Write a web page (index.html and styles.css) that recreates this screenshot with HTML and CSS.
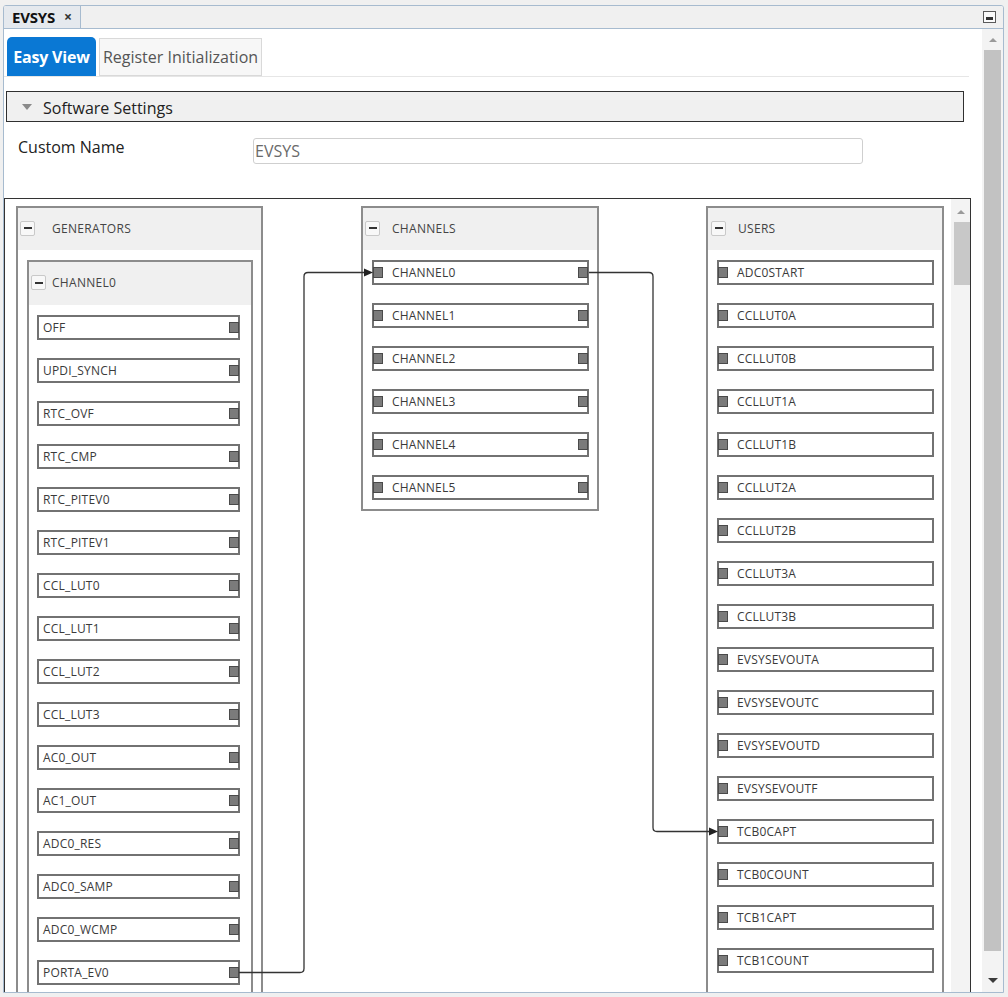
FILE: index.html
```html
<!DOCTYPE html>
<html>
<head>
<meta charset="utf-8">
<title>EVSYS</title>
<link rel="stylesheet" href="styles.css">
</head>
<body>
<div class="panel">
  <div class="tabbar">
    <div class="doc-tab"><span class="doc-title">EVSYS</span><span class="doc-close">×</span></div>
    <div class="min-btn"><span></span></div>
  </div>
  <div class="main">
    <div class="content">
      <div class="view-tabs">
        <div class="vtab active">Easy View</div>
        <div class="vtab">Register Initialization</div>
      </div>
      <div class="section-head"><span class="tri"></span><span class="section-title">Software Settings</span></div>
      <div class="field-row">
        <div class="field-label">Custom Name</div>
        <div class="field-input">EVSYS</div>
      </div>
      <div class="diagram">
        <div class="canvas">
          <div class="box box-gen">
            <div class="box-head"><span class="collapse"></span><span class="box-title t-gen">GENERATORS</span></div>
            <div class="box sub">
              <div class="box-head sub-head"><span class="collapse"></span><span class="box-title t-sub">CHANNEL0</span></div>
              <div class="items items-gen">
                <div class="item"><span class="label">OFF</span><span class="port right"></span></div>
                <div class="item"><span class="label">UPDI_SYNCH</span><span class="port right"></span></div>
                <div class="item"><span class="label">RTC_OVF</span><span class="port right"></span></div>
                <div class="item"><span class="label">RTC_CMP</span><span class="port right"></span></div>
                <div class="item"><span class="label">RTC_PITEV0</span><span class="port right"></span></div>
                <div class="item"><span class="label">RTC_PITEV1</span><span class="port right"></span></div>
                <div class="item"><span class="label">CCL_LUT0</span><span class="port right"></span></div>
                <div class="item"><span class="label">CCL_LUT1</span><span class="port right"></span></div>
                <div class="item"><span class="label">CCL_LUT2</span><span class="port right"></span></div>
                <div class="item"><span class="label">CCL_LUT3</span><span class="port right"></span></div>
                <div class="item"><span class="label">AC0_OUT</span><span class="port right"></span></div>
                <div class="item"><span class="label">AC1_OUT</span><span class="port right"></span></div>
                <div class="item"><span class="label">ADC0_RES</span><span class="port right"></span></div>
                <div class="item"><span class="label">ADC0_SAMP</span><span class="port right"></span></div>
                <div class="item"><span class="label">ADC0_WCMP</span><span class="port right"></span></div>
                <div class="item"><span class="label">PORTA_EV0</span><span class="port right"></span></div>
              </div>
            </div>
          </div>

          <div class="box box-chan">
            <div class="box-head"><span class="collapse"></span><span class="box-title t-col">CHANNELS</span></div>
            <div class="items items-side">
              <div class="item"><span class="port left"></span><span class="label lp">CHANNEL0</span><span class="port right"></span></div>
              <div class="item"><span class="port left"></span><span class="label lp">CHANNEL1</span><span class="port right"></span></div>
              <div class="item"><span class="port left"></span><span class="label lp">CHANNEL2</span><span class="port right"></span></div>
              <div class="item"><span class="port left"></span><span class="label lp">CHANNEL3</span><span class="port right"></span></div>
              <div class="item"><span class="port left"></span><span class="label lp">CHANNEL4</span><span class="port right"></span></div>
              <div class="item"><span class="port left"></span><span class="label lp">CHANNEL5</span><span class="port right"></span></div>
            </div>
          </div>

          <div class="box box-users">
            <div class="box-head"><span class="collapse c-users"></span><span class="box-title t-col">USERS</span></div>
            <div class="items items-side">
              <div class="item"><span class="port left"></span><span class="label lp">ADC0START</span></div>
              <div class="item"><span class="port left"></span><span class="label lp">CCLLUT0A</span></div>
              <div class="item"><span class="port left"></span><span class="label lp">CCLLUT0B</span></div>
              <div class="item"><span class="port left"></span><span class="label lp">CCLLUT1A</span></div>
              <div class="item"><span class="port left"></span><span class="label lp">CCLLUT1B</span></div>
              <div class="item"><span class="port left"></span><span class="label lp">CCLLUT2A</span></div>
              <div class="item"><span class="port left"></span><span class="label lp">CCLLUT2B</span></div>
              <div class="item"><span class="port left"></span><span class="label lp">CCLLUT3A</span></div>
              <div class="item"><span class="port left"></span><span class="label lp">CCLLUT3B</span></div>
              <div class="item"><span class="port left"></span><span class="label lp">EVSYSEVOUTA</span></div>
              <div class="item"><span class="port left"></span><span class="label lp">EVSYSEVOUTC</span></div>
              <div class="item"><span class="port left"></span><span class="label lp">EVSYSEVOUTD</span></div>
              <div class="item"><span class="port left"></span><span class="label lp">EVSYSEVOUTF</span></div>
              <div class="item"><span class="port left"></span><span class="label lp">TCB0CAPT</span></div>
              <div class="item"><span class="port left"></span><span class="label lp">TCB0COUNT</span></div>
              <div class="item"><span class="port left"></span><span class="label lp">TCB1CAPT</span></div>
              <div class="item"><span class="port left"></span><span class="label lp">TCB1COUNT</span></div>
            </div>
          </div>

          <svg class="wires" width="946" height="792" viewBox="5 199 946 792" xmlns="http://www.w3.org/2000/svg">
            <path d="M239 972.5 H300 Q304 972.5 304 968.5 V276.5 Q304 272.5 308 272.5 H366" fill="none" stroke="#333" stroke-width="1.3"/>
            <polygon points="373,272.5 364,268.5 364,276.5" fill="#222"/>
            <path d="M589 272.5 H649 Q653 272.5 653 276.5 V827.5 Q653 831.5 657 831.5 H711" fill="none" stroke="#333" stroke-width="1.3"/>
            <polygon points="718,831.5 709,827.5 709,835.5" fill="#222"/>
          </svg>
        </div>
        <div class="vscroll">
          <span class="arr up"></span>
          <span class="thumb"></span>
        </div>
      </div>
    </div>
    <div class="oscroll">
      <span class="arr up"></span>
      <span class="othumb"></span>
      <span class="arr down"></span>
    </div>
  </div>
</div>
</body>
</html>
```

FILE: styles.css
```css
* { box-sizing: border-box; }
html, body { margin: 0; padding: 0; }
body {
  background: #f0f0f0;
  font-family: "Open Sans", "Noto Sans", sans-serif;
  width: 1008px;
  height: 997px;
  overflow: hidden;
}

.panel {
  margin: 5px 0 0 3px;
  width: 1001px;
  height: 988px;
  border: 1px solid #a7bbcf;
  border-radius: 3px 3px 0 0;
  background: #fff;
  display: flex;
  flex-direction: column;
  overflow: hidden;
}

/* document tab bar */
.tabbar {
  height: 23px;
  flex: none;
  display: flex;
  background: #f0f0f0;
  border-bottom: 1px solid #a7bbcf;
}
.doc-tab {
  width: 77px;
  display: flex;
  align-items: center;
  padding-left: 8px;
  background: #e5e9ee;
  border-right: 1px solid #a7bbcf;
}
.doc-title { font-weight: 700; font-size: 15px; color: #111; letter-spacing: -0.2px; }
.doc-close { margin-left: 9px; font-weight: 700; font-size: 14px; color: #333; line-height: 1; }
.min-btn {
  margin-left: auto;
  margin-right: 7px;
  align-self: center;
  width: 13px;
  height: 12px;
  border: 1px solid #5a5a5a;
  background: #fafafa;
  display: flex;
  align-items: flex-end;
  justify-content: center;
  padding-bottom: 2px;
}
.min-btn span { width: 7px; height: 3px; background: #333; }

.main { flex: 1; display: flex; min-height: 0; }
.content { width: 978px; flex: none; overflow: hidden; background: #fff; }

/* view tabs */
.view-tabs {
  width: 965px;
  height: 48px;
  padding: 8px 0 0 3px;
  border-bottom: 1px solid #e6e6e6;
  display: flex;
  align-items: flex-end;
  gap: 3px;
}
.vtab {
  font-size: 16px;
  display: flex;
  align-items: center;
  justify-content: center;
}
.vtab.active {
  width: 89px;
  height: 39px;
  background: #0a78d4;
  color: #fff;
  font-weight: 700;
  border-radius: 5px 5px 0 0;
  letter-spacing: -0.2px;
}
.vtab:not(.active) {
  width: 163px;
  height: 38px;
  background: #f7f7f7;
  border: 1px solid #d9d9d9;
  color: #555;
}

/* section header */
.section-head {
  margin: 14px 0 0 2px;
  width: 958px;
  height: 31px;
  border: 1px solid #303030;
  background: #f0f0f0;
  display: flex;
  align-items: center;
  font-size: 16px;
  color: #222;
}
.section-title { padding-top: 2px; }
.tri {
  margin-left: 15px;
  margin-right: 11px;
  width: 0;
  height: 0;
  border-left: 5px solid transparent;
  border-right: 5px solid transparent;
  border-top: 6px solid #8a8a8a;
}

.field-row {
  display: flex;
  align-items: flex-start;
  margin-top: 16px;
  padding-left: 14px;
}
.field-label {
  width: 235px;
  margin-top: -1px;
  font-size: 16px;
  line-height: 20px;
  color: #222;
}
.field-input {
  width: 610px;
  height: 26px;
  border: 1px solid #cfcfcf;
  border-radius: 3px;
  font-size: 16px;
  line-height: 24px;
  color: #6a6a6a;
  padding-left: 1px;
}

/* diagram */
.diagram {
  margin-top: 34px;
  width: 967px;
  height: 800px;
  border: 1px solid #333;
  display: flex;
  flex: none;
}
.canvas {
  flex: 1;
  position: relative;
  overflow: hidden;
  display: flex;
  align-items: flex-start;
  padding: 7px 0 0 11px;
}
.wires { position: absolute; left: 0; top: 0; }

.box {
  border: 2px solid #8c8c8c;
  background: #fff;
  flex: none;
}
.box-gen { width: 247px; padding-bottom: 60px; }
.box-chan { width: 238px; margin-left: 98px; padding-bottom: 9px; }
.box-users { width: 238px; margin-left: 107px; padding-bottom: 40px; }
.sub { width: 226px; margin: 10px 0 0 9px; padding-bottom: 40px; }

.box-head {
  height: 42px;
  background: #f0f0f0;
  display: flex;
  align-items: center;
  padding-bottom: 2px;
}
.sub-head { height: 43px; }
.collapse {
  margin-left: 2px;
  width: 15px;
  height: 15px;
  border: 1px solid #c9c9c9;
  border-radius: 2px;
  background: #f8f8f8;
  display: flex;
  align-items: center;
  justify-content: center;
  flex: none;
}
.collapse::before { content: ""; width: 8px; height: 2px; background: #333; }
.c-users { margin-left: 3px; }
.box-title { font-size: 12px; color: #444; letter-spacing: 0.3px; }
.t-gen { margin-left: 17px; }
.t-sub { margin-left: 6px; }
.t-col { margin-left: 12px; }

.items { display: flex; flex-direction: column; gap: 18px; padding-top: 10px; }
.items-gen { padding-left: 8px; }
.items-gen .item { width: 203px; }
.items-side { padding-left: 9px; }
.items-side .item { width: 217px; }

.item {
  height: 25px;
  border: 2px solid #727272;
  background: #fff;
  display: flex;
  align-items: center;
  font-size: 12px;
  color: #3a3a3a;
  letter-spacing: 0.2px;
}
.label { padding-left: 4px; white-space: nowrap; }
.label.lp { padding-left: 9px; }
.port {
  width: 10px;
  height: 11px;
  background: #7b7b7b;
  border: 1px solid #4a4a4a;
  flex: none;
}
.port.left { margin-left: -1px; }
.port.right { margin-left: auto; margin-right: -1px; }

/* scrollbars */
.vscroll {
  width: 19px;
  flex: none;
  background: #f3f3f3;
  display: flex;
  flex-direction: column;
  align-items: center;
  padding: 11px 0 0 1px;
}
.thumb { width: 16px; height: 63px; background: #c8c8c8; margin-top: 8px; margin-left: 1px; }
.arr { width: 0; height: 0; border-left: 4px solid transparent; border-right: 4px solid transparent; }
.arr.up { border-bottom: 4px solid #9a9a9a; }
.arr.down { border-top: 5px solid #3a3a3a; border-left-width: 5px; border-right-width: 5px; margin-top: auto; }

.oscroll {
  flex: 1;
  background: #f3f3f3;
  display: flex;
  flex-direction: column;
  align-items: center;
  padding: 9px 0 9px 0;
}
.othumb { width: 17px; height: 901px; background: #c2c2c2; margin-top: 8px; }
```
